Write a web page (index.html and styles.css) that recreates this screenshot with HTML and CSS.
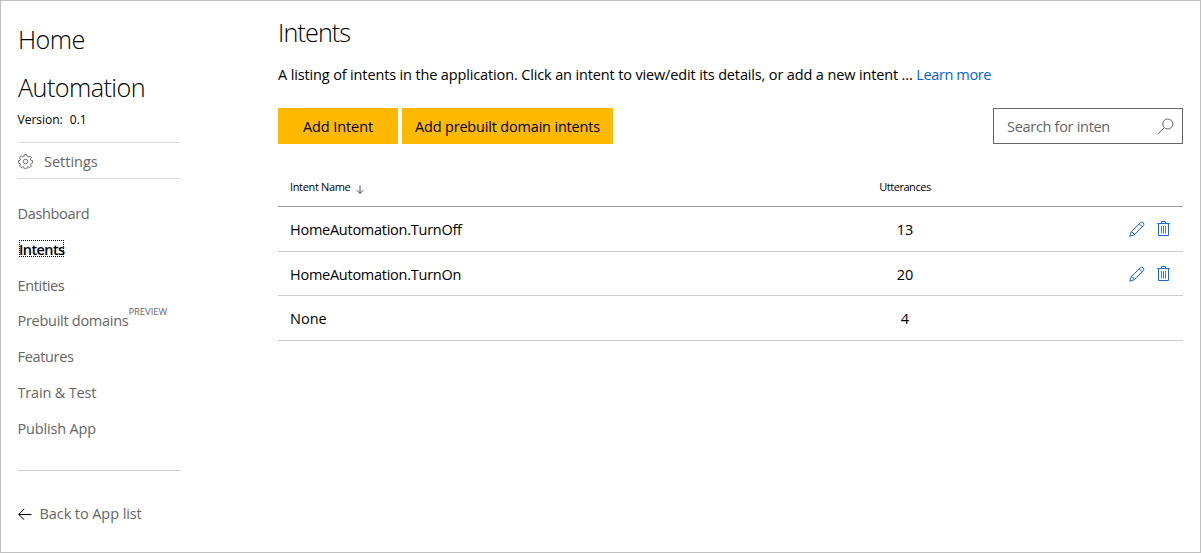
FILE: index.html
```html
<!DOCTYPE html>
<html lang="en">
<head>
<meta charset="utf-8">
<title>Home Automation - Intents</title>
<link rel="stylesheet" href="styles.css">
</head>
<body>
<svg class="defs" width="0" height="0" aria-hidden="true">
  <symbol id="pencil" viewBox="0 0 16 16"><path d="M.8 15.200 2.200 10.800 11.300 1.700Q12.800.3 14.200 1.700 15.700 3.200 14.300 4.700L5.200 13.800ZM2.200 10.800Q4.800 11.200 5.200 13.800M10.200 2.800 13.200 5.800"/></symbol>
  <symbol id="trash" viewBox="0 0 13 16"><path d="M.3 2.500H12.700M4.500 2.500V.5H8.500V2.500M1.500 2.500V14.500H11.500V2.500"/><path class="slats" d="M4.500 5V12.500M6.500 5V12.500M8.500 5V12.500"/></symbol>
</svg>
<div class="page">
  <aside class="sidebar">
    <h1 class="app-name">Home Automation</h1>
    <div class="version"><span>Version:</span><span>0.1</span></div>
    <a class="settings">
      <svg class="gear" viewBox="0 0 16 16"><circle cx="8" cy="8" r="2.400"/><path d="M6.700.8h2.600l.4 1.900 1.100.5 1.700-1.100 1.800 1.800-1.100 1.700.5 1.100 1.900.4v2.600l-1.900.4-.5 1.100 1.100 1.700-1.800 1.800-1.700-1.100-1.100.5-.4 1.900H6.700l-.4-1.900-1.100-.5-1.700 1.100-1.800-1.800 1.100-1.700-.5-1.100-1.900-.4V7.100l1.900-.4.5-1.100-1.100-1.700 1.800-1.800 1.700 1.100 1.100-.5z"/></svg>
      <span class="settings-label">Settings</span>
    </a>
    <nav class="nav">
      <a class="dashboard">Dashboard</a>
      <a class="active"><span class="focus">Intents</span></a>
      <a class="entities">Entities</a>
      <a class="prebuilt">Prebuilt domains<span class="preview">PREVIEW</span></a>
      <a class="features">Features</a>
      <a class="train">Train &amp; Test</a>
      <a class="publish">Publish App</a>
    </nav>
    <a class="back"><svg class="back-arrow" viewBox="0 0 14 12"><path d="M.5 6.500H13.500M6.300.8.7 6.500 6.300 11.800"/></svg><span class="back-label">Back to App list</span></a>
  </aside>
  <main class="main">
    <h2 class="title">Intents</h2>
    <p class="intro">A listing of intents in the application. Click an intent to view/edit its details, or add a new intent ... <a class="learn">Learn more</a></p>
    <div class="toolbar">
      <button class="btn add">Add Intent</button>
      <button class="btn add-prebuilt">Add prebuilt domain intents</button>
      <div class="search"><span class="search-text">Search for inten</span><svg class="lens" viewBox="0 0 17 17"><circle cx="10.800" cy="6" r="5"/><path d="M7.200 9.700.7 16.200"/></svg></div>
    </div>
    <div class="table">
      <div class="row head"><span class="name">Intent Name<svg class="sort" viewBox="0 0 8 9"><path d="M4 .5V8.500M.7 5.200 4 8.500 7.300 5.200"/></svg></span><span class="count">Utterances</span></div>
      <div class="row r1"><span class="name">HomeAutomation.TurnOff</span><span class="count">13</span><span class="actions"><svg class="pencil"><use href="#pencil"/></svg><svg class="trash"><use href="#trash"/></svg></span></div>
      <div class="row r2"><span class="name">HomeAutomation.TurnOn</span><span class="count">20</span><span class="actions"><svg class="pencil"><use href="#pencil"/></svg><svg class="trash"><use href="#trash"/></svg></span></div>
      <div class="row r3"><span class="name none">None</span><span class="count">4</span></div>
    </div>
  </main>
</div>
</body>
</html>
```
FILE: styles.css
```css
* { box-sizing: border-box; }
body { margin: 0; font: 14.5px/20px "Open Sans", "Noto Sans", sans-serif; color: #000; background: #fff; }
.defs { position: absolute; }
svg { fill: none; stroke: #555; stroke-width: 1; flex: none; }
a { color: #666; }
h1, h2, p { margin: 0; }
.page { width: 1201px; height: 553px; border: 1px solid #c0c0c0; display: flex; overflow: hidden; }
.sidebar { width: 163px; margin-left: 16px; padding-top: 15px; display: flex; flex-direction: column; white-space: nowrap; }
.app-name { font-size: 25.200px; font-weight: 300; line-height: 48px; white-space: normal; letter-spacing: -.56px; padding-left: 1px; margin-top: -1px; }
.version { display: flex; gap: 7px; font-size: 12px; line-height: 18px; padding-left: .5px; }
.settings { display: flex; align-items: center; gap: 12px; height: 37px; margin-top: 13px; margin-left: 1px; border-top: 1px solid #ddd; border-bottom: 1px solid #ddd; padding-top: 2px; }
.gear { width: 15px; height: 15px; stroke: #666; }
.settings-label { margin-left: -1px; }
.nav { display: flex; flex-direction: column; margin: 17px 0 0 1px; height: 275px; border-bottom: 1px solid #ccc; letter-spacing: -.34px; }
.nav a { height: 35.800px; line-height: 36px; margin-left: -.5px; }
.nav .active { color: #000; font-weight: 600; letter-spacing: -.6px; }
.focus { display: block; width: 45px; height: 17px; margin: 8px 0 0 1.5px; border: 1px dotted #000; line-height: 17px; text-indent: -1px; }
.nav .prebuilt { display: flex; letter-spacing: -.28px; }
.nav .train, .nav .publish { letter-spacing: -.17px; }
.preview { font-size: 9.500px; line-height: 18px; letter-spacing: -.05px; }
.back { display: flex; align-items: center; gap: 8px; margin: 33px 0 0 1px; letter-spacing: -.08px; }
.back-arrow { width: 14px; height: 12px; stroke: #000; }
.back-label { margin-left: -.5px; }
.main { width: 905px; margin-left: 98px; padding-top: 12px; white-space: nowrap; }
.title { font-size: 25.200px; font-weight: 300; line-height: 38px; letter-spacing: -.9px; }
.intro { margin-top: 14px; letter-spacing: -.14px; }
.learn { color: #0064d8; letter-spacing: -.37px; }
.toolbar { display: flex; gap: 4px; height: 36px; margin-top: 23px; }
.btn { border: 0; padding: 2px 0 0; background: #ffb900; font: inherit; color: #000; }
.add { width: 120px; letter-spacing: -.1px; }
.add-prebuilt { width: 211px; letter-spacing: -.18px; }
.search { margin-left: auto; width: 190px; border: 1px solid #666; display: flex; align-items: center; justify-content: space-between; padding: 0 8px 0 13px; color: #666; }
.search-text { letter-spacing: -.3px; padding-top: 2px; }
.lens { width: 17px; height: 17px; stroke: #666; }
.table { margin-top: 23px; }
.row { display: grid; grid-template-columns: 528px 174px 1fr; align-items: center; border-bottom: 1px solid #ccc; height: 45px; padding-left: 12px; }
.name, .count { padding-top: 2px; }
.name { letter-spacing: -.26px; }
.none { letter-spacing: 0; }
.head { height: 40px; border-color: #999; font-size: 11px; }
.head > span { padding-top: 0; }
.head .name { letter-spacing: -.35px; }
.head .count { letter-spacing: -.47px; }
.r2 { height: 44px; }
.count { text-align: center; }
.sort { width: 8px; height: 9px; margin-left: 6px; vertical-align: -3px; stroke: #546; }
.actions { display: flex; justify-content: flex-end; gap: 12px; padding-right: 13px; }
.actions svg { height: 16px; stroke: #1668d4; }
.slats { stroke: #6a6ac8; }
.pencil { width: 16px; }
.trash { width: 13px; }
```
